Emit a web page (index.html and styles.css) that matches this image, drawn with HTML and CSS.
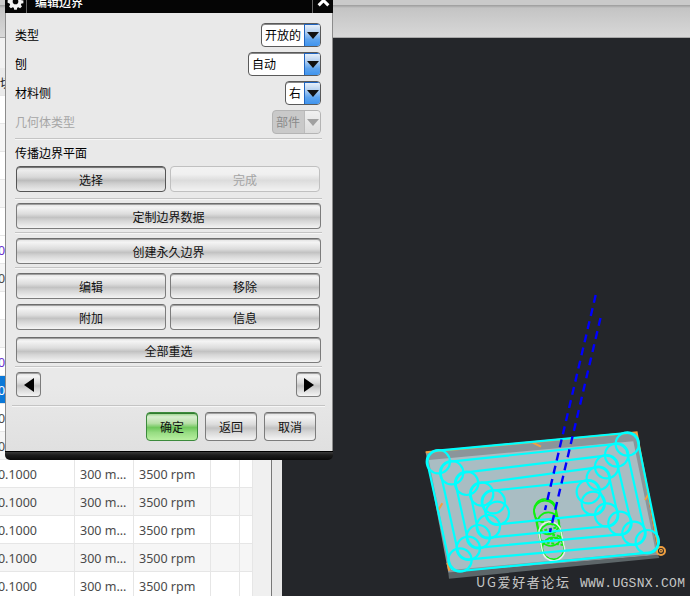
FILE: index.html
```html
<!DOCTYPE html>
<html lang="zh-CN">
<head>
<meta charset="utf-8">
<title>编辑边界</title>
<link rel="stylesheet" href="styles.css">
</head>
<body>
<div class="app">
  <header class="strip"></header>
  <main class="work">
    <section class="panel">
      <div class="list">
        <div class="bar"></div>
        <div class="row head"><span class="cell">切</span><span class="cell"></span><span class="cell"></span><span class="cell"></span><span class="cell"></span></div>
        <div class="row"><span class="cell"></span><span class="cell"></span><span class="cell"></span><span class="cell"></span><span class="cell"></span></div>
        <div class="row alt"><span class="cell"></span><span class="cell"></span><span class="cell"></span><span class="cell"></span><span class="cell"></span></div>
        <div class="row"><span class="cell"></span><span class="cell"></span><span class="cell"></span><span class="cell"></span><span class="cell"></span></div>
        <div class="row alt"><span class="cell"></span><span class="cell"></span><span class="cell"></span><span class="cell"></span><span class="cell"></span></div>
        <div class="row"><span class="cell"></span><span class="cell"></span><span class="cell"></span><span class="cell"></span><span class="cell"></span></div>
        <div class="row purple"><span class="cell num">0.1000</span><span class="cell"></span><span class="cell"></span><span class="cell"></span><span class="cell"></span></div>
        <div class="row alt"><span class="cell num">0.1000</span><span class="cell"></span><span class="cell"></span><span class="cell"></span><span class="cell"></span></div>
        <div class="row"><span class="cell"></span><span class="cell"></span><span class="cell"></span><span class="cell"></span><span class="cell"></span></div>
        <div class="row alt"><span class="cell"></span><span class="cell"></span><span class="cell"></span><span class="cell"></span><span class="cell"></span></div>
        <div class="row purple"><span class="cell num">0.1000</span><span class="cell"></span><span class="cell"></span><span class="cell"></span><span class="cell"></span></div>
        <div class="row selected"><span class="cell num">0.1000</span><span class="cell"></span><span class="cell"></span><span class="cell"></span><span class="cell"></span></div>
        <div class="row"><span class="cell num">0.1000</span><span class="cell"></span><span class="cell"></span><span class="cell"></span><span class="cell"></span></div>
        <div class="row alt"><span class="cell num">0.1000</span><span class="cell"></span><span class="cell"></span><span class="cell"></span><span class="cell"></span></div>
        <div class="row"><span class="cell num">0.1000</span><span class="cell">300 m...</span><span class="cell">3500 rpm</span><span class="cell"></span><span class="cell"></span></div>
        <div class="row alt"><span class="cell num">0.1000</span><span class="cell">300 m...</span><span class="cell">3500 rpm</span><span class="cell"></span><span class="cell"></span></div>
        <div class="row"><span class="cell num">0.1000</span><span class="cell">300 m...</span><span class="cell">3500 rpm</span><span class="cell"></span><span class="cell"></span></div>
        <div class="row alt"><span class="cell num">0.1000</span><span class="cell">300 m...</span><span class="cell">3500 rpm</span><span class="cell"></span><span class="cell"></span></div>
        <div class="row"><span class="cell num">0.1000</span><span class="cell">300 m...</span><span class="cell">3500 rpm</span><span class="cell"></span><span class="cell"></span></div>
      </div>
      <div class="gutter"></div>
      <div class="sash"></div>
    </section>
    <section class="viewport">
      <svg class="scene" viewBox="282 38 408 558" xmlns="http://www.w3.org/2000/svg">
        <g transform="translate(410 420) scale(0.3333)">
          <polygon class="plate-side" points="115,458 745,405 748,414 117,476"/>
          <polygon class="plate-wall" points="47,97 680,37 745,405 115,458"/>
          <polygon class="plate-floor" points="56,120 670,64 737,394 123,450"/>
          <g class="orange">
            <path d="M47 97L680 37L745 385"/>
            <path d="M368 68L393 80M85 270L97 250M705 240L717 220M112 428L118 452"/>
            <circle cx="753" cy="393" r="12"/>
            <circle class="orange-dot" cx="753" cy="392" r="4"/>
          </g>
          <g class="green">
            <path d="M372 272A33 33 0 0 1 438 268L463 385"/>
            <path d="M372 272L396 388A33 33 0 0 0 430 418"/>
            <circle cx="405" cy="275" r="33"/>
            <circle cx="415" cy="310" r="33"/>
            <circle cx="422" cy="345" r="33"/>
            <circle cx="430" cy="385" r="33"/>
            <path class="zig" d="M380 300L450 320L385 335L455 350L392 365L460 375"/>
          </g>
          <path class="pale" d="M387 342A33 33 0 0 1 453 335L464 385A33 33 0 0 1 397 392Z"/>
          <g class="cyan">
            <path d="M82 92L649 39A33 33 0 0 1 684 65L744 358A33 33 0 0 1 715 398L153 453A33 33 0 0 1 118 427L53 132A33 33 0 0 1 82 92Z"/>
            <path d="M122 125L617 72A33 33 0 0 1 652 98L704 333A33 33 0 0 1 675 373L178 418A33 33 0 0 1 143 392L93 165A33 33 0 0 1 122 125Z"/>
            <path d="M167 157L587 107A33 33 0 0 1 622 133L662 303A33 33 0 0 1 633 343L208 383A33 33 0 0 1 173 357L138 197A33 33 0 0 1 167 157Z"/>
            <path d="M212 189L562 142A33 33 0 0 1 597 168L622 278A33 33 0 0 1 593 318L238 353A33 33 0 0 1 203 327L183 229A33 33 0 0 1 212 189Z"/>
            <path d="M247 212L532 182A33 33 0 0 1 567 208L582 243A33 33 0 0 1 553 283L265 313A33 33 0 0 1 230 287L218 252A33 33 0 0 1 247 212Z"/>
            <circle cx="85" cy="125" r="35"/><circle cx="125" cy="158" r="35"/><circle cx="170" cy="190" r="35"/><circle cx="215" cy="222" r="35"/><circle cx="250" cy="245" r="35"/><circle cx="262" cy="280" r="35"/>
            <circle cx="652" cy="72" r="35"/><circle cx="620" cy="105" r="35"/><circle cx="590" cy="140" r="35"/><circle cx="565" cy="175" r="35"/><circle cx="535" cy="215" r="35"/><circle cx="550" cy="250" r="35"/>
            <circle cx="712" cy="365" r="35"/><circle cx="672" cy="340" r="35"/><circle cx="630" cy="310" r="35"/><circle cx="590" cy="285" r="35"/>
            <circle cx="150" cy="420" r="35"/><circle cx="175" cy="385" r="35"/><circle cx="205" cy="350" r="35"/><circle cx="235" cy="320" r="35"/>
          </g>
        </g>
        <path class="blue" d="M595.7 295L545 510"/>
        <path class="blue" d="M600.5 318L550 532"/>
        <text class="mark" x="476" y="587">UG爱好者论坛<tspan class="mark-latin" x="580">WWW.UGSNX.COM</tspan></text>
      </svg>
    </section>
  </main>

  <div class="dialog">
    <div class="titlebar">
      <div class="tb-icon">
        <svg class="gear" viewBox="0 0 16 16" xmlns="http://www.w3.org/2000/svg"><path d="M6.6 0h2.8l.4 2.1 1.3.6 1.8-1.2 2 2-1.2 1.8.6 1.3 2.1.4v2.8l-2.1.4-.6 1.3 1.2 1.8-2 2-1.8-1.2-1.3.6-.4 2.1H6.6l-.4-2.1-1.3-.6-1.8 1.2-2-2 1.2-1.8-.6-1.3L-.4 9.4V6.6l2.1-.4.6-1.3L1.1 3.1l2-2 1.8 1.2 1.3-.6zM8 5a3 3 0 1 0 0 6 3 3 0 0 0 0-6z"/></svg>
      </div>
      <div class="tb-title">编辑边界</div>
      <div class="tb-close">
        <svg class="closex" viewBox="0 0 12 12" xmlns="http://www.w3.org/2000/svg"><path d="M1.5 1.5L10.5 10.5M10.5 1.5L1.5 10.5"/></svg>
      </div>
    </div>
    <div class="body">
      <div class="field"><span>类型</span><div class="select w60"><span class="val">开放的</span><span class="drop"><i></i></span></div></div>
      <div class="field"><span>刨</span><div class="select w73"><span class="val">自动</span><span class="drop"><i></i></span></div></div>
      <div class="field"><span>材料侧</span><div class="select w36"><span class="val">右</span><span class="drop"><i></i></span></div></div>
      <div class="field off"><span>几何体类型</span><div class="select w49 dis"><span class="val">部件</span><span class="drop"><i></i></span></div></div>
      <div class="sep s1"></div>
      <div class="grouplabel">传播边界平面</div>
      <div class="btnrow"><button class="btn active">选择</button><button class="btn disabled">完成</button></div>
      <div class="sep s2"></div>
      <button class="btn wide">定制边界数据</button>
      <div class="sep s3"></div>
      <button class="btn wide">创建永久边界</button>
      <div class="sep s3"></div>
      <div class="btnrow"><button class="btn">编辑</button><button class="btn">移除</button></div>
      <div class="btnrow r2"><button class="btn">附加</button><button class="btn">信息</button></div>
      <button class="btn wide r3">全部重选</button>
      <div class="sep s3"></div>
      <div class="arrows">
        <button class="btn arrow"><i class="tri left"></i></button>
        <button class="btn arrow"><i class="tri right"></i></button>
      </div>
      <div class="sep s4"></div>
      <div class="footer">
        <button class="btn fbtn ok">确定</button>
        <button class="btn fbtn">返回</button>
        <button class="btn fbtn">取消</button>
      </div>
    </div>
    <div class="dlgbottom"></div>
  </div>
</div>
</body>
</html>
```
FILE: styles.css
```css
* { box-sizing: border-box; }
html, body { margin: 0; padding: 0; }
body {
  width: 690px;
  height: 596px;
  overflow: hidden;
  font-family: "Noto Sans CJK SC", "Noto Sans", sans-serif;
  font-size: 12px;
  color: #000;
  background: #24262a;
}
.app { position: relative; width: 690px; height: 596px; overflow: hidden; display: flex; flex-direction: column; }

/* top strip */
.strip {
  height: 38px;
  flex: none;
  border-bottom: 1px solid #a8a8a8;
  background: linear-gradient(#cacaca 0, #cacaca 5px, #9c9c9c 5px, #a8a8a8 6px, #c4c4c4 8px, #d8d8d8 100%);
}
.work { flex: 1; display: flex; min-height: 0; }

/* operation list */
.panel { width: 282px; flex: none; display: flex; background: #e8e8e8; }
.list { width: 253px; flex: none; background: #fff; overflow: hidden; }
.bar { height: 30px; background: #f2f2f2; }
.row {
  display: grid;
  grid-template-columns: 75px 59px 77px 29px 13px;
  height: 28px;
  background: #fff;
  color: #4a4a4a;
  font-family: "Noto Sans", sans-serif;
  font-size: 12.5px;
  line-height: 29px;
}
.row.alt { background: #f6f6f6; }
.row.head { background: #eaeaea; color: #222; font-family: "Noto Sans CJK SC", sans-serif; font-size: 12px; }
.row.purple { color: #6a2fd0; }
.row.selected { background: #0a78d8; color: #fff; }
.cell {
  border-right: 1px solid #e6e6e6;
  border-bottom: 1px solid #e6e6e6;
  padding-left: 5px;
  white-space: nowrap;
  overflow: hidden;
}
.row.head .cell:first-child { padding-left: 0; }
.cell.num { padding: 0 37px 0 0; display: flex; justify-content: flex-end; }
.gutter { width: 18px; flex: none; background: #f0f0f0; }
.sash { width: 11px; flex: none; border-left: 1px solid #777; background: #e8e8e8; }

/* viewport */
.viewport { flex: 1; background: #24262a; min-width: 0; }
.scene { display: block; width: 408px; height: 558px; }
.plate-side { fill: #5d6669; }
.plate-wall { fill: #8b959a; }
.plate-floor { fill: #a9bdc3; }
.orange { fill: none; stroke: #f0a040; stroke-width: 6; }
.orange-dot { fill: #24262a; stroke-width: 4; }
.cyan { fill: none; stroke: #00ffff; stroke-width: 6.5; }
.green { fill: none; stroke: #10f010; stroke-width: 5; }
.zig { stroke-width: 6; stroke-dasharray: 9 5; }
.pale { fill: none; stroke: #e8ecec; stroke-width: 4.5; }
.blue { fill: none; stroke: #0000ff; stroke-width: 2.4; stroke-dasharray: 8 5.5; }
.mark { fill: #c6c6c6; font-family: "Noto Sans CJK SC", serif; font-size: 13px; letter-spacing: 1.6px; }
.mark-latin { font-family: "Liberation Mono", monospace; font-size: 13px; letter-spacing: 0.3px; }

/* dialog window */
.dialog {
  position: absolute;
  left: 5px;
  top: -10px;
  width: 328px;
  display: flex;
  flex-direction: column;
}
.titlebar { height: 23px; background: #050505; display: flex; color: #fff; }
.tb-icon { width: 22px; border-right: 1px solid #666; display: flex; align-items: center; justify-content: center; flex: none; }
.gear { width: 15px; height: 15px; fill: #f4f4f4; fill-rule: evenodd; overflow: visible; }
.tb-title { flex: 1; padding-left: 8px; line-height: 23px; font-size: 12px; font-weight: 500; }
.tb-close { width: 21px; border-left: 1px solid #666; display: flex; align-items: center; justify-content: center; flex: none; padding-bottom: 2px; }
.closex { width: 13px; height: 13px; fill: none; stroke: #fff; stroke-width: 2.8; }

.body {
  height: 438px;
  padding: 10px 10px 0 9px;
  border-left: 1px solid #8c8c8c;
  border-right: 1px solid #8c8c8c;
  background: linear-gradient(#e9e9e9 0, #e9e9e9 85%, #e0e0e0 100%);
}
.field { height: 24px; margin-bottom: 5px; display: flex; align-items: center; justify-content: space-between; line-height: 24px; padding-right: 1px; }
.field.off { color: #a6a6a6; margin-bottom: 0; }
.select {
  height: 24px;
  display: flex;
  border: 1px solid #5a5a5a;
  border-radius: 4px;
  background: #fff;
  overflow: hidden;
  box-shadow: inset 0 1px 0 #888;
}
.w60 { width: 60px; }
.w73 { width: 73px; }
.w36 { width: 36px; }
.w49 { width: 49px; }
.val { flex: 1; padding-left: 3px; line-height: 21px; white-space: nowrap; }
.drop {
  width: 16px;
  flex: none;
  display: flex;
  align-items: center;
  justify-content: center;
  background: linear-gradient(#eef4fb 0, #b8d2f0 35%, #5ea4ee 70%, #3f94ee 100%);
  border-left: 1px solid #1f64c0;
  box-shadow: inset 0 1px 0 #1f64c0;
}
.drop i {
  width: 0;
  height: 0;
  border-left: 6px solid transparent;
  border-right: 6px solid transparent;
  border-top: 7px solid #111;
}
.select.dis { background: #c9c9c9; border-color: #b4b4b4; color: #8a8a8a; box-shadow: none; }
.select.dis .drop { background: linear-gradient(#f0f0f0, #dcdcdc); border-left-color: #bbb; box-shadow: none; }
.select.dis .drop i { border-top-color: #a0a0a0; }

.sep { height: 2px; border-top: 1px solid #c4c4c4; border-bottom: 1px solid #f6f6f6; }
.s1 { margin: 4px 0 5px; }
.s2 { margin: 6px 0 3px; }
.s3 { margin: 3px 0 4px; }
.s4 { margin: 8px -3px 5px; }
.grouplabel { height: 16px; line-height: 16px; margin-bottom: 5px; }

.btn {
  display: block;
  height: 26px;
  padding: 0;
  border: 1px solid #7c7c7c;
  border-top-color: #6c6c6c;
  border-radius: 4px;
  font: inherit;
  color: #111;
  text-align: center;
  background: linear-gradient(#e0e0e0 0, #f4f4f4 14%, #dcdcdc 42%, #c2c2c2 56%, #d6d6d6 70%, #f4f4f4 100%);
  box-shadow: inset 0 1px 0 #a0a0a0;
}
.btn.active { border-color: #555; box-shadow: inset 0 1px 0 #777; background: linear-gradient(#d8d8d8 0, #ececec 14%, #d8d8d8 42%, #bcbcbc 56%, #d0d0d0 70%, #ececec 100%); }
.btn.disabled { border-color: #c0c0c0; color: #a4a4a4; box-shadow: none; background: linear-gradient(#f2f2f2 0, #f0f0f0 30%, #dcdcdc 56%, #e6e6e6 75%, #f2f2f2 100%); }
.btnrow { display: flex; gap: 4px; margin-left: 1px; }
.btnrow .btn { width: 150px; }
.r2 { margin-top: 5px; }
.wide { width: 305px; margin-left: 1px; }
.r3 { margin-top: 7px; }
.arrows { display: flex; justify-content: space-between; margin: 0 1px; }
.arrow { width: 25px; height: 25px; display: flex; align-items: center; justify-content: center; }
.tri { width: 0; height: 0; border-top: 7px solid transparent; border-bottom: 7px solid transparent; }
.tri.left { border-right: 10px solid #000; }
.tri.right { border-left: 10px solid #000; }
.footer { display: flex; justify-content: flex-end; gap: 7px; padding-right: 6px; }
.fbtn { width: 52px; height: 29px; }
.ok {
  border-color: #3c8a3c;
  box-shadow: inset 0 1px 0 #2f7a2f;
  background: linear-gradient(#8fce7f 0, #d8eed0 14%, #b8e0a8 38%, #6fc85c 54%, #96dc82 72%, #b8f0a0 100%);
}
.dlgbottom {
  height: 9px;
  border-top: 1px solid #000;
  border-radius: 0 0 5px 5px;
  background: linear-gradient(#3a3a3a, #1c1c1c 40%, #0a0a0a);
}
```
